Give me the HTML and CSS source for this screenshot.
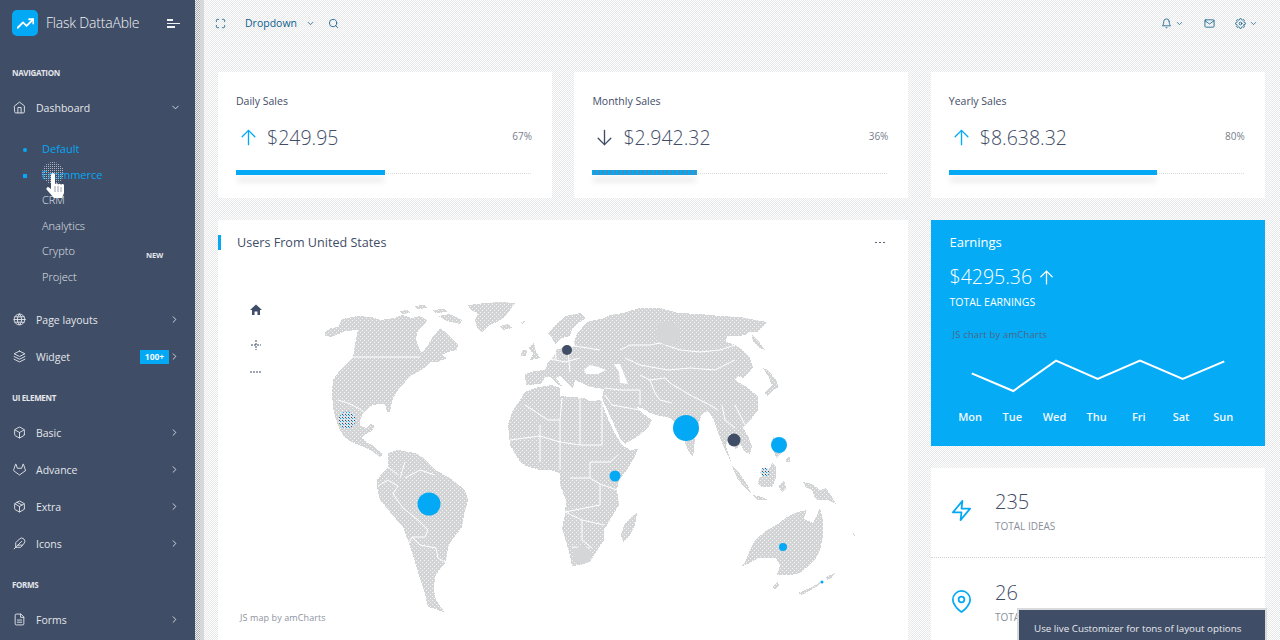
FILE: index.html
```html
<!DOCTYPE html>
<html lang="en">
<head>
<meta charset="utf-8">
<title>Flask DattaAble</title>
<link rel="stylesheet" href="styles.css">
</head>
<body>
<svg class="defs" width="0" height="0" aria-hidden="true">
  <defs>
    <symbol id="i-home" viewBox="0 0 24 24"><path d="M3 9l9-7 9 7v11a2 2 0 0 1-2 2H5a2 2 0 0 1-2-2z"/><polyline points="9 22 9 12 15 12 15 22"/></symbol>
    <symbol id="i-globe" viewBox="0 0 24 24"><circle cx="12" cy="12" r="10"/><line x1="2" y1="12" x2="22" y2="12"/><line x1="3.5" y1="7" x2="20.5" y2="7"/><line x1="3.5" y1="17" x2="20.5" y2="17"/><path d="M12 2a15 15 0 0 1 4 10 15 15 0 0 1-4 10 15 15 0 0 1-4-10 15 15 0 0 1 4-10z"/></symbol>
    <symbol id="i-layers" viewBox="0 0 24 24"><polygon points="12 2 2 7 12 12 22 7 12 2"/><polyline points="2 17 12 22 22 17"/><polyline points="2 12 12 17 22 12"/></symbol>
    <symbol id="i-box" viewBox="0 0 24 24"><path d="M21 16V8a2 2 0 0 0-1-1.73l-7-4a2 2 0 0 0-2 0l-7 4A2 2 0 0 0 3 8v8a2 2 0 0 0 1 1.73l7 4a2 2 0 0 0 2 0l7-4A2 2 0 0 0 21 16z"/><polyline points="3.27 6.96 12 12.01 20.73 6.96"/><line x1="12" y1="22.08" x2="12" y2="12"/></symbol>
    <symbol id="i-package" viewBox="0 0 24 24"><line x1="16.5" y1="9.4" x2="7.5" y2="4.21"/><path d="M21 16V8a2 2 0 0 0-1-1.73l-7-4a2 2 0 0 0-2 0l-7 4A2 2 0 0 0 3 8v8a2 2 0 0 0 1 1.73l7 4a2 2 0 0 0 2 0l7-4A2 2 0 0 0 21 16z"/><polyline points="3.27 6.96 12 12.01 20.73 6.96"/><line x1="12" y1="22.08" x2="12" y2="12"/></symbol>
    <symbol id="i-gitlab" viewBox="0 0 24 24"><path d="M22.65 14.39L12 22.13 1.35 14.39a.84.84 0 0 1-.3-.94l1.22-3.78 2.44-7.51A.42.42 0 0 1 4.82 2a.43.43 0 0 1 .58 0 .42.42 0 0 1 .11.18l2.44 7.49h8.1l2.44-7.51A.42.42 0 0 1 18.6 2a.43.43 0 0 1 .58 0 .42.42 0 0 1 .11.18l2.44 7.51L23 13.45a.84.84 0 0 1-.35.94z"/></symbol>
    <symbol id="i-feather" viewBox="0 0 24 24"><path d="M20.24 12.24a6 6 0 0 0-8.49-8.49L5 10.5V19h8.5z"/><line x1="16" y1="8" x2="2" y2="22"/><line x1="17.5" y1="15" x2="9" y2="15"/></symbol>
    <symbol id="i-file" viewBox="0 0 24 24"><path d="M14 2H6a2 2 0 0 0-2 2v16a2 2 0 0 0 2 2h12a2 2 0 0 0 2-2V8z"/><polyline points="14 2 14 8 20 8"/><line x1="16" y1="13" x2="8" y2="13"/><line x1="16" y1="17" x2="8" y2="17"/></symbol>
    <symbol id="i-down" viewBox="0 0 24 24"><polyline points="6 9 12 15 18 9"/></symbol>
    <symbol id="i-right" viewBox="0 0 24 24"><polyline points="9 18 15 12 9 6"/></symbol>
    <symbol id="i-search" viewBox="0 0 24 24"><circle cx="11" cy="11" r="8"/><line x1="21" y1="21" x2="16.65" y2="16.65"/></symbol>
    <symbol id="i-max" viewBox="0 0 24 24"><path d="M8 3H5a2 2 0 0 0-2 2v3m18 0V5a2 2 0 0 0-2-2h-3m0 18h3a2 2 0 0 0 2-2v-3M3 16v3a2 2 0 0 0 2 2h3"/></symbol>
    <symbol id="i-bell" viewBox="0 0 24 24"><path d="M18 8A6 6 0 0 0 6 8c0 7-3 9-3 9h18s-3-2-3-9"/><path d="M13.73 21a2 2 0 0 1-3.46 0"/></symbol>
    <symbol id="i-mail" viewBox="0 0 24 24"><path d="M4 4h16c1.1 0 2 .9 2 2v12c0 1.1-.9 2-2 2H4c-1.1 0-2-.9-2-2V6c0-1.1.9-2 2-2z"/><polyline points="22,6 12,13 2,6"/></symbol>
    <symbol id="i-gear" viewBox="0 0 24 24"><circle cx="12" cy="12" r="3"/><path d="M19.4 15a1.65 1.65 0 0 0 .33 1.82l.06.06a2 2 0 0 1 0 2.83 2 2 0 0 1-2.83 0l-.06-.06a1.65 1.65 0 0 0-1.82-.33 1.65 1.65 0 0 0-1 1.51V21a2 2 0 0 1-2 2 2 2 0 0 1-2-2v-.09A1.65 1.65 0 0 0 9 19.4a1.65 1.65 0 0 0-1.82.33l-.06.06a2 2 0 0 1-2.83 0 2 2 0 0 1 0-2.83l.06-.06a1.65 1.65 0 0 0 .33-1.82 1.65 1.65 0 0 0-1.51-1H3a2 2 0 0 1-2-2 2 2 0 0 1 2-2h.09A1.65 1.65 0 0 0 4.6 9a1.65 1.65 0 0 0-.33-1.82l-.06-.06a2 2 0 0 1 0-2.83 2 2 0 0 1 2.83 0l.06.06a1.65 1.65 0 0 0 1.82.33H9a1.65 1.65 0 0 0 1-1.51V3a2 2 0 0 1 2-2 2 2 0 0 1 2 2v.09a1.65 1.65 0 0 0 1 1.51 1.65 1.65 0 0 0 1.82-.33l.06-.06a2 2 0 0 1 2.83 0 2 2 0 0 1 0 2.83l-.06.06a1.65 1.65 0 0 0-.33 1.82V9a1.65 1.65 0 0 0 1.51 1H21a2 2 0 0 1 2 2 2 2 0 0 1-2 2h-.09a1.65 1.65 0 0 0-1.51 1z"/></symbol>
    <symbol id="i-up-arrow" viewBox="0 0 24 24"><line x1="12" y1="21" x2="12" y2="3"/><polyline points="4 11 12 3 20 11"/></symbol>
    <symbol id="i-down-arrow" viewBox="0 0 24 24"><line x1="12" y1="3" x2="12" y2="21"/><polyline points="4 13 12 21 20 13"/></symbol>
    <symbol id="i-zap" viewBox="0 0 24 24"><polygon points="13 2 3 14 12 14 11 22 21 10 12 10 13 2"/></symbol>
    <symbol id="i-pin" viewBox="0 0 24 24"><path d="M21 10c0 7-9 13-9 13s-9-6-9-13a9 9 0 0 1 18 0z"/><circle cx="12" cy="10" r="3"/></symbol>
    <pattern id="land-dots" width="4" height="4" patternUnits="userSpaceOnUse">
      <rect width="4" height="4" fill="#d3d4d6"/>
      <rect x="0" y="0" width="1" height="1" fill="#f6f6f7"/>
      <rect x="2" y="2" width="1" height="1" fill="#f6f6f7"/>
    </pattern>
    <pattern id="hatch" width="3" height="3" patternUnits="userSpaceOnUse">
      <rect width="3" height="3" fill="#dfe3e8"/>
      <rect x="0" y="0" width="1" height="1" fill="#3f4d67"/>
      <rect x="1" y="1" width="1" height="1" fill="#04a9f5"/>
    </pattern>
    <pattern id="ripple" width="2" height="2" patternUnits="userSpaceOnUse">
      <rect x="0" y="0" width="1" height="1" fill="#aeb4bf"/>
    </pattern>
  </defs>
</svg>

<div class="app">
  <aside class="sidebar">
    <div class="brand">
      <span class="brand-logo"><svg class="ico-logo-draw" viewBox="0 0 24 24"><polyline points="23 6 13.5 15.5 8.5 10.5 1 18"/><polyline points="17 6 23 6 23 12"/></svg></span>
      <span class="brand-name">Flask DattaAble</span>
      <span class="brand-toggle"><i class="tg tg-a"></i><i class="tg tg-b"></i><i class="tg tg-c"></i></span>
    </div>

    <div class="nav-label">NAVIGATION</div>
    <div class="nav-item"><svg class="ico"><use href="#i-home"/></svg><span class="nav-text">Dashboard</span><svg class="ico ico-ch ico-ch-d"><use href="#i-down"/></svg></div>
    <ul class="sub">
      <li class="sub-item active"><i class="bullet round"></i>Default</li>
      <li class="sub-item active"><i class="bullet"></i>Ecommerce</li>
      <li class="sub-item">CRM</li>
      <li class="sub-item">Analytics</li>
      <li class="sub-item">Crypto<span class="new">NEW</span></li>
      <li class="sub-item">Project</li>
    </ul>
    <div class="nav-item"><svg class="ico"><use href="#i-globe"/></svg><span class="nav-text">Page layouts</span><svg class="ico ico-ch"><use href="#i-right"/></svg></div>
    <div class="nav-item"><svg class="ico"><use href="#i-layers"/></svg><span class="nav-text">Widget</span><span class="badge">100+</span><svg class="ico ico-ch ico-ch-b"><use href="#i-right"/></svg></div>

    <div class="nav-label">UI ELEMENT</div>
    <div class="nav-item"><svg class="ico"><use href="#i-box"/></svg><span class="nav-text">Basic</span><svg class="ico ico-ch"><use href="#i-right"/></svg></div>
    <div class="nav-item"><svg class="ico"><use href="#i-gitlab"/></svg><span class="nav-text">Advance</span><svg class="ico ico-ch"><use href="#i-right"/></svg></div>
    <div class="nav-item"><svg class="ico"><use href="#i-package"/></svg><span class="nav-text">Extra</span><svg class="ico ico-ch"><use href="#i-right"/></svg></div>
    <div class="nav-item"><svg class="ico"><use href="#i-feather"/></svg><span class="nav-text">Icons</span><svg class="ico ico-ch"><use href="#i-right"/></svg></div>

    <div class="nav-label">FORMS</div>
    <div class="nav-item"><svg class="ico"><use href="#i-file"/></svg><span class="nav-text">Forms</span><svg class="ico ico-ch"><use href="#i-right"/></svg></div>
  </aside>
  <div class="edge"></div>

  <main class="main">
    <header class="topbar">
      <div class="top-left">
        <svg class="ico top-ico top-max"><use href="#i-max"/></svg>
        <span class="dd">Dropdown</span>
        <svg class="ico top-ch"><use href="#i-down"/></svg>
        <svg class="ico top-ico top-search"><use href="#i-search"/></svg>
      </div>
      <div class="top-right">
        <span class="top-group"><svg class="ico top-ico"><use href="#i-bell"/></svg><svg class="ico top-ch"><use href="#i-down"/></svg></span>
        <svg class="ico top-ico"><use href="#i-mail"/></svg>
        <span class="top-group"><svg class="ico top-ico"><use href="#i-gear"/></svg><svg class="ico top-ch"><use href="#i-down"/></svg></span>
      </div>
    </header>

    <section class="sales">
      <article class="card sale">
        <h6 class="sale-title">Daily Sales</h6>
        <div class="sale-row"><svg class="ico sale-arrow up"><use href="#i-up-arrow"/></svg><span class="sale-value">$249.95</span><span class="sale-pct">67%</span></div>
        <div class="track"><div class="fill" style="width:50.5%"></div></div>
      </article>
      <article class="card sale">
        <h6 class="sale-title">Monthly Sales</h6>
        <div class="sale-row"><svg class="ico sale-arrow dn"><use href="#i-down-arrow"/></svg><span class="sale-value">$2.942.32</span><span class="sale-pct">36%</span></div>
        <div class="track"><div class="fill fill-dither" style="width:35.3%"></div></div>
      </article>
      <article class="card sale">
        <h6 class="sale-title">Yearly Sales</h6>
        <div class="sale-row"><svg class="ico sale-arrow up"><use href="#i-up-arrow"/></svg><span class="sale-value">$8.638.32</span><span class="sale-pct">80%</span></div>
        <div class="track"><div class="fill" style="width:70.5%"></div></div>
      </article>
    </section>

    <section class="lower">
      <article class="card map-card">
        <div class="map-head"><h5 class="map-title">Users From United States</h5><span class="dots"><i></i><i></i><i></i></span></div>
        <svg class="map" viewBox="218 264 690 400" width="690" height="400" role="img" aria-label="World map">
          <g class="land" fill="url(#land-dots)">
            <path d="M325 332L331 328L338 327L342 319L358 316L372 317L380 320L395 318L402 315L412 318L420 316L427 320L425 324L418 330L416 340L420 350L422 353L428 345L432 338L440 328L447 333L453 340L458 345L457 350L448 352L442 355L447 358L438 362L430 362L424 368L418 372L410 376L405 382L398 390L393 398L391 406L390 412L387 412L385 404L378 404L370 406L364 412L360 420L360 426L366 428L371 424L375 426L372 431L366 434L362 437L366 442L372 445L378 450L383 455L380 457L372 451L364 447L354 443L345 438L340 430L336 420L333 408L332 393L333 380L340 370L348 363L353 357L355 345L358 330L345 331L332 337L325 336Z"/>
            <path d="M468 305L485 303L500 302L515 303L510 310L505 317L497 322L490 325L482 332L477 328L475 320L478 314L470 309Z"/>
            <path d="M400 311L408 310L410 313L402 314Z"/>
            <path d="M414 306L424 305L428 308L418 309Z"/>
            <path d="M432 310L444 309L448 312L436 313Z"/>
            <path d="M438 316L450 314L462 320L460 324L447 321Z"/>
            <path d="M520 322L526 321L522 324Z"/>
            <path d="M388 453L398 450L408 452L415 453L424 458L435 470L450 478L465 490L468 500L464 515L462 527L452 540L448 547L447 555L445 563L438 572L435 577L434 590L436 600L445 613L436 609L428 607L424 590L418 572L413 555L407 538L403 527L390 512L380 500L377 487L377 480L383 472L388 467Z"/>
            <path d="M508 425L512 412L520 400L525 392L538 387L552 385L560 388L560 396L572 397L584 398L590 401L601 400L606 414L614 432L622 445L630 450L638 449L634 458L627 470L619 480L617 490L619 505L610 520L604 530L604 540L596 552L590 562L580 565L572 566L569 552L562 528L565 515L566 500L560 485L560 473L550 470L540 470L526 466L520 462L510 445Z"/>
            <path d="M637 513L635 525L630 535L623 542L621 535L624 525L630 518Z"/>
            <path d="M525 374L535 371L545 370L548 362L553 358L556 350L566 346L574 342L577 334L587 322L604 318L610 315L623 313L640 308L660 308L678 313L700 314L720 316L740 317L755 320L767 322L762 328L757 332L750 332L745 335L738 336L727 336L726 342L735 345L743 350L750 358L753 367L750 372L743 378L738 376L735 380L745 386L758 396L758 410L752 418L746 424L743 428L748 436L752 446L750 454L745 452L740 444L736 450L730 432L726 446L731 462L725 450L719 435L714 420L708 411L702 414L696 432L693 457L688 450L684 440L678 425L670 418L660 416L650 413L642 408L636 407L642 413L652 420L648 428L638 436L625 444L620 438L612 420L605 405L602 398L604 389L590 387L584 384L575 380L573 388L566 382L560 376L556 378L562 386L558 385L550 377L545 377L541 384L526 385Z"/>
            <path d="M548 334L556 324L566 316L580 313L586 318L577 324L572 330L570 336L562 338L555 344L552 338Z"/>
            <path d="M529 348L534 342L536 352L540 358L530 360L533 354Z"/>
            <path d="M522 350L527 350L526 356L521 356Z"/>
            <path d="M500 326L508 324L512 328L503 330Z"/>
            <path d="M752 335L758 340L765 350L760 348L753 342Z"/>
            <path d="M763 368L768 370L776 380L779 387L773 390L768 396L764 393L772 385L768 376Z"/>
            <path d="M732 466L740 474L748 486L751 493L745 488L737 478Z"/>
            <path d="M752 495L762 497L768 500L758 500Z"/>
            <path d="M759 478L767 474L772 463L776 466L776 478L772 487L762 487L758 484Z"/>
            <path d="M778 486L784 480L786 488L782 492Z"/>
            <path d="M773 437L778 440L782 452L776 458L772 445Z"/>
            <path d="M786 458L790 457L790 462L786 462Z"/>
            <path d="M803 482L812 484L820 490L826 488L832 497L836 504L828 500L818 500L815 498L812 490L806 488Z"/>
            <path d="M740 567L745 562L750 550L755 540L767 530L778 524L787 517L797 512L807 510L804 519L813 523L817 515L820 508L823 520L823 537L820 550L815 560L806 568L800 573L790 575L777 575L780 565L776 558L768 558L758 558L750 563Z"/>
            <path d="M772 587L778 582L779 585L775 589Z"/>
            <path d="M798 593L810 588L822 581L816 587L802 595Z"/>
            <path d="M826 577L835 573L832 578L827 580Z"/>
            <path d="M853 533L855 535L854 537Z"/>
          </g>
          <g class="sea">
            <path d="M584 370L590 365L598 367L606 370L598 374L586 374Z"/>
            <path d="M614 364L620 364L624 374L628 384L620 383L619 372Z"/>
            <path d="M566 340L573 338L575 346L568 349L564 344Z"/>
          </g>
          <g class="borders">
            <path d="M353 357L420 357"/>
            <path d="M338 400L348 403L358 408L364 412"/>
            <path d="M378 486L388 480L398 486L393 494L403 508L418 520L428 530L425 537L412 537L408 545"/>
            <path d="M412 537L420 545L436 548L438 558L450 565"/>
            <path d="M400 478L405 462M405 478L420 470L435 475M388 467L398 475"/>
            <path d="M525 405L548 420L560 420L562 398"/>
            <path d="M540 425L540 462M560 420L560 470"/>
            <path d="M580 398L580 445L602 445L602 401"/>
            <path d="M510 440L540 436L560 442L580 445"/>
            <path d="M570 478L590 478L590 462L610 462L618 455"/>
            <path d="M590 478L600 484L617 490M600 484L600 505L565 512"/>
            <path d="M565 512L582 520L582 540L592 548M582 520L604 525"/>
            <path d="M572 547L590 548"/>
            <path d="M620 350L630 345L650 345L660 343L680 350L700 352L720 350L735 345"/>
            <path d="M625 358L640 365L668 370L690 368L715 370L735 360"/>
            <path d="M670 383L690 395L710 405L718 410"/>
            <path d="M650 380L655 393L660 400L672 403"/>
            <path d="M640 375L650 380L665 378L670 383"/>
            <path d="M605 388L620 390L640 390L640 405"/>
            <path d="M605 395L612 405L640 410"/>
            <path d="M722 405L725 420L735 428M735 405L745 425"/>
            <path d="M545 358L565 362L580 358M555 346L556 360M568 350L570 372"/>
            <path d="M575 346L600 350"/>
          </g>
          <circle class="ghost" cx="668" cy="333" r="12"/>
          <circle class="ghost" cx="582" cy="555" r="9"/>
          <circle class="bub" cx="429" cy="504" r="11.5"/>
          <circle class="bub" cx="686" cy="428" r="13"/>
          <circle class="bub" cx="779" cy="445" r="8"/>
          <circle class="bub" cx="615" cy="476" r="5.5"/>
          <circle class="bub" cx="783" cy="547" r="4"/>
          <circle class="bub" cx="822" cy="582" r="1.5"/>
          <circle class="bub-dark" cx="567" cy="350" r="5"/>
          <circle class="bub-dark" cx="734" cy="440" r="6.5"/>
          <circle class="bub-hatch" cx="347" cy="420" r="8.5"/>
          <circle class="bub-hatch" cx="765" cy="472" r="4.5"/>
          <g class="map-ctl">
            <path class="ctl-home" d="M256 304.500L262 310H260V315H257.500V311.500H254.500V315H252V310H250Z"/>
            <path class="ctl-line" d="M256 340V350M251 345H261M250 372H261"/>
          </g>
          <text class="credit" x="240" y="621">JS map by amCharts</text>
        </svg>
      </article>

      <div class="side-col">
        <article class="earn">
          <h5 class="earn-title">Earnings</h5>
          <div class="earn-value"><span>$4295.36</span><svg class="ico earn-arrow"><use href="#i-up-arrow"/></svg></div>
          <div class="earn-sub">TOTAL EARNINGS</div>
          <div class="earn-credit">JS chart by amCharts</div>
          <svg class="earn-chart" viewBox="949 345 298 60" width="298" height="60" aria-hidden="true"><polyline points="970.700,373.300 1012.300,391 1055,360.700 1096.700,379 1139,360.700 1181.700,379 1223.300,361.300"/></svg>
          <div class="earn-days"><span>Mon</span><span>Tue</span><span>Wed</span><span>Thu</span><span>Fri</span><span>Sat</span><span>Sun</span></div>
        </article>
        <article class="card totals">
          <div class="total"><svg class="ico total-ico"><use href="#i-zap"/></svg><div><div class="total-num">235</div><div class="total-lbl">TOTAL IDEAS</div></div></div>
          <div class="total total-b"><svg class="ico total-ico"><use href="#i-pin"/></svg><div><div class="total-num">26</div><div class="total-lbl">TOTAL LOCATIONS</div></div></div>
        </article>
      </div>
    </section>
  </main>
</div>

<div class="toast">Use live Customizer for tons of layout options</div>

<svg class="cursor" viewBox="0 0 30 42" width="30" height="42" aria-hidden="true">
  <circle cx="13" cy="11" r="11" fill="url(#ripple)"/>
  <path class="hand" d="M11 13a2 2 0 0 1 4 0v9l1-.500a1.500 1.500 0 0 1 2 1l1-.500a1.500 1.500 0 0 1 2 1 1.500 1.500 0 0 1 3 1v7l-2 5H14l-7-8a1.500 1.500 0 0 1 2-2.500l2 1.500z"/>
  <path class="hand-line" d="M15 24v6M18 24v6M21 25v5"/>
</svg>
</body>
</html>
```
FILE: styles.css
```css
* { box-sizing: border-box; }
html, body { margin: 0; height: 640px; overflow: hidden; }
body {
  position: relative;
  font-family: "Open Sans", "Liberation Sans", sans-serif;
  color: #3f4d67;
  background: repeating-conic-gradient(#e7e8ea 0 25%, #fff 0 50%) 0 0 / 2px 2px;
}
h5, h6 { margin: 0; font-weight: 400; }
ul { margin: 0; padding: 0; list-style: none; }
i { display: block; }
.defs { position: absolute; }
.ico { fill: none; stroke: currentColor; stroke-width: 2; stroke-linecap: round; stroke-linejoin: round; display: block; flex: none; }

.app { display: flex; height: 640px; }

/* Sidebar */
.sidebar { width: 195px; flex: none; background: #3f4d67; color: #e3e6ea; font-size: 10.500px; overflow: hidden; }
.edge {
  width: 9px;
  flex: none;
  background:
    linear-gradient(90deg, transparent 0 5px, #d6d7d9 5px 9px),
    repeating-conic-gradient(#a9adb6 0 25%, #f0f0f1 0 50%) 0 0 / 2px 2px;
}
.brand { height: 50px; padding: 10px 0 0 12px; display: flex; align-items: flex-start; }
.brand-logo { width: 26px; height: 26px; border-radius: 5px; background: #04a9f5; display: flex; align-items: center; justify-content: center; }
.ico-logo-draw { width: 17px; height: 17px; fill: none; stroke: #fff; stroke-width: 2.500; stroke-linecap: round; stroke-linejoin: round; }
.brand-name { margin: 3px 0 0 8px; font-size: 14px; line-height: 19px; font-weight: 300; color: #f1f2f4; letter-spacing: -.2px; }
.brand-toggle { margin: 9px 0 0 28px; width: 13px; display: flex; flex-direction: column; gap: 2px; }
.tg { height: 1.500px; background: #f1f2f4; }
.tg-a { width: 6px; }
.tg-b { width: 13px; }
.tg-c { width: 8px; }
.nav-label { margin: 15px 0 8px 12px; height: 16px; line-height: 16px; font-size: 8px; font-weight: 700; letter-spacing: -.35px; color: #e3e6ea; }
.nav-item { height: 37px; display: flex; align-items: center; padding: 0 14px 0 13px; }
.nav-item .ico { width: 13px; height: 13px; stroke-width: 1.700; }
.nav-text { margin-left: 10px; flex: 1; font-weight: 400; }
.nav-item .ico-ch { width: 11px; height: 11px; stroke-width: 1.900; margin-right: 1px; }
.nav-item .ico-ch-d { margin-right: 0; }
.sub { padding: 10px 0 11.500px; }
.sub-item { height: 25.600px; line-height: 25.600px; padding-left: 42px; position: relative; display: flex; font-size: 11px; font-weight: 300; }
.sub-item.active { color: #04a9f5; font-weight: 400; }
.bullet { position: absolute; left: 23px; top: 12px; width: 4px; height: 4px; background: #04a9f5; }
.bullet.round { border-radius: 50%; }
.new { position: absolute; left: 146px; font-size: 7.500px; font-weight: 700; top: 5px; color: #e3e6ea; letter-spacing: -.2px; }
.badge { background: #04a9f5; color: #f4f6f8; font-size: 8.500px; font-weight: 700; width: 29px; height: 14px; line-height: 14px; text-align: center; }

/* Main */
.main { flex: 1; min-width: 0; padding: 0 15px 0 14px; overflow: hidden; }
.topbar { height: 46px; display: flex; align-items: center; justify-content: space-between; color: #0d5d8c; }
.top-left, .top-right, .top-group { display: flex; align-items: center; }
.top-ico { width: 11px; height: 11px; stroke-width: 1.800; }
.top-max { margin-left: -3px; }
.dd { margin-left: 19px; font-size: 10.500px; }
.top-ch { width: 9px; height: 9px; margin-left: 9px; stroke-width: 2; }
.top-search { margin-left: 13.500px; }
.top-right { gap: 20px; padding-right: 7px; }
.top-group .top-ch { margin-left: 3px; }

.sales { margin-top: 26px; display: grid; grid-template-columns: repeat(3, 334px); gap: 22.400px; }
.card { background: #fff; }
.sale { height: 126px; padding: 21px 18px 0; }
.sale-title { font-size: 10.500px; line-height: 16px; color: #3f4d67; }
.sale-row { margin-top: 14px; height: 28px; display: flex; align-items: center; }
.sale-arrow { width: 19px; height: 19px; stroke-width: 1.700; margin-left: 3px; }
.sale-arrow.up { color: #04a9f5; }
.sale-arrow.dn { color: #3f4d67; }
.sale-value { margin-left: 9px; font-size: 19.500px; font-weight: 300; color: #3f4d67; flex: 1; }
.sale-pct { font-size: 10px; color: #777e8c; margin-top: -2px; margin-right: 2px; }
.track { margin-top: 19px; height: 5px; width: 295px; position: relative; }
.track::before { content: ""; position: absolute; left: 0; right: 0; top: 3px; border-top: 1px dotted #d9dadd; }
.fill { position: relative; height: 5px; background: #04a9f5; box-shadow: 0 7px 6px -1px #d9dadc; }
.fill-dither { background: repeating-linear-gradient(90deg, #04a9f5 0 2px, #3f8fc0 2px 4px); }

.lower { margin-top: 22px; display: grid; grid-template-columns: 690px 334px; gap: 23px; }
.map-card { height: 420px; overflow: hidden; }
.map-head { height: 44px; display: flex; align-items: center; justify-content: space-between; padding: 0 23px 0 16px; border-left: 3px solid transparent; position: relative; }
.map-head::before { content: ""; position: absolute; left: -3px; top: 15px; width: 3px; height: 15px; background: #04a9f5; }
.map-title { font-size: 12.600px; color: #3f4d67; }
.dots { display: flex; gap: 2px; }
.dots i { width: 2px; height: 1px; background: #59647b; }
.map { display: block; }
.sea path { fill: #fff; }
.borders path { fill: none; stroke: #fff; stroke-width: 1; }
.land path { shape-rendering: crispEdges; }
.ghost { fill: #d5d6d8; }
.bub { fill: #04a9f5; }
.bub-dark { fill: #3f4d67; }
.bub-hatch { fill: url(#hatch); }
.ctl-home { fill: #3f4d67; }
.ctl-line { fill: none; stroke: #3f4d67; stroke-width: 1; stroke-dasharray: 2 1; }
.credit { font-size: 9px; letter-spacing: .1px; fill: #8e94a1; font-family: "Open Sans", sans-serif; }

.side-col { display: flex; flex-direction: column; gap: 22px; }
.earn { height: 226px; background: #06abf5; color: #fff; padding: 13px 18.500px 0; }
.earn-title { font-size: 13px; line-height: 18px; font-weight: 400; }
.earn-value { margin-top: 12px; display: flex; align-items: center; font-size: 19.500px; line-height: 28px; font-weight: 300; gap: 6px; }
.earn-arrow { width: 17px; height: 17px; stroke-width: 1.800; }
.earn-sub { margin-top: 3px; font-size: 10.500px; line-height: 16px; }
.earn-credit { margin-top: 19px; margin-left: 3px; font-size: 9.500px; letter-spacing: .15px; line-height: 12px; color: #4a6787; }
.earn-chart { display: block; margin-top: 4px; }
.earn-chart polyline { fill: none; stroke: #fff; stroke-width: 2; stroke-linejoin: miter; }
.earn-days { margin-top: 4px; margin-left: -.500px; display: grid; grid-template-columns: repeat(7, 42.200px); text-align: center; font-size: 11px; font-weight: 600; color: #f0f8fd; }

.totals { height: 240px; }
.total { height: 90px; padding: 21px 0 0 18px; display: flex; border-bottom: 1px dotted #cfd0d3; }
.total-b { padding-top: 22px; border-bottom: 0; }
.total-ico { width: 23px; height: 23px; color: #04a9f5; stroke-width: 1.800; margin: 10px 22px 0 1px; }
.total-num { font-size: 20px; line-height: 26px; font-weight: 300; color: #3f4d67; }
.total-lbl { font-size: 10px; line-height: 14px; margin-top: 4px; color: #8a8f9a; }

/* Overlays */
.toast { position: absolute; left: 1019px; top: 610px; width: 246px; height: 40px; background: #3f4d67; color: #e8eaee; font-size: 9.800px; padding: 12px 15px; box-shadow: 0 0 0 2px #d9dadc; white-space: nowrap; }
.cursor { position: absolute; left: 40px; top: 162px; }
.hand { fill: #fff; }
.hand-line { fill: none; stroke: #9aa1ae; stroke-width: 1; }
```
